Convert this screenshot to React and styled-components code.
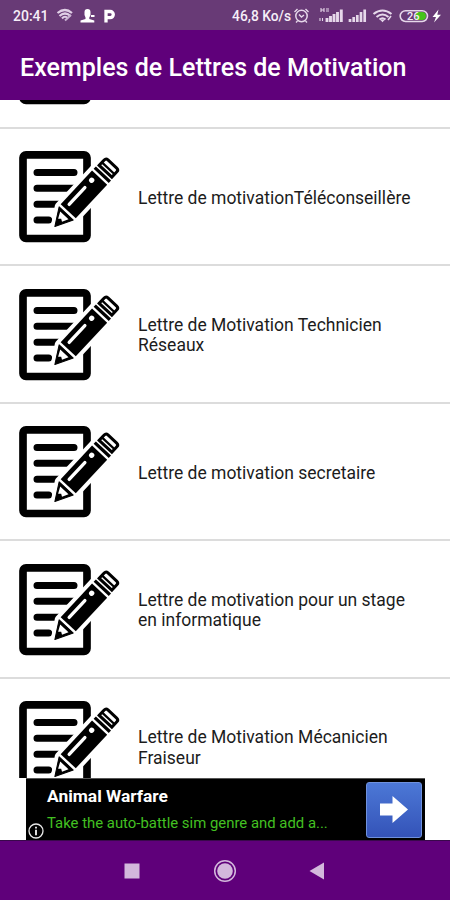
import React from 'react';
import styled, { createGlobalStyle } from 'styled-components';

const letters = [
    { id: 1, title: 'Lettre de motivationTéléconseillère' },
    { id: 2, title: 'Lettre de Motivation Technicien Réseaux' },
    { id: 3, title: 'Lettre de motivation secretaire' },
    { id: 4, title: 'Lettre de motivation pour un stage en informatique' },
    { id: 5, title: 'Lettre de Motivation Mécanicien Fraiseur' }
];

const LetterIcon = () => (
    <PageSvg viewBox="27 30 306 279">
        <rect x="39" y="44.5" width="192" height="251" rx="9" fill="#fff" stroke="#000" strokeWidth="23" />
        <path d="M81 97.5H192M81 145H192M81 192.5H150M81 240H116" stroke="#000" strokeWidth="21" strokeLinecap="round" />
        <g transform="translate(277 104) rotate(-47)">
            {/* white halo keeps the pencil clear of the sheet */}
            <path d="M-208 0L-158 -31H42V31H-158Z" fill="#fff" stroke="#fff" strokeWidth="24" strokeLinejoin="round" />
            <path d="M-211 2L-159 -29V29Z" fill="#000" stroke="#000" strokeWidth="3" strokeLinejoin="round" />
            <path d="M-167 -17V17L-186 8L-181 0L-187 -7Z" fill="#fff" />
            <path d="M-150 -31H-12V31H-150Z" fill="#000" />
            <path d="M-133 -12H-64" stroke="#fff" strokeWidth="10" strokeLinecap="round" />
            <circle cx="-34" cy="-12" r="8" fill="#fff" />
            <path d="M0 -31V31" stroke="#000" strokeWidth="10" />
            <path d="M14 -26H36Q44 -26 44 -18V18Q44 26 36 26H14Z" fill="#fff" stroke="#000" strokeWidth="9" />
            <path d="M26 -26V26" stroke="#000" strokeWidth="7" />
        </g>
    </PageSvg>
);

const NoticeIcons = () => (
    <svg width="62" height="20" viewBox="56 6 62 20" fill="none">
        <path d="M57.500 13Q65 7 72 13M59.500 16Q65 11 70.500 16M62 18.500Q65 15 68 18.500" stroke="#e0cfe6" strokeWidth="2.200" />
        <path d="M65 20.500L71 15" stroke="#c9b2d2" strokeWidth="2" />
        <path d="M84.500 12q0-3 3-3t3 3v3l-1.200 2.500v1.500l5 1.500v2H80.500v-2l5-1.500v-1.500L84.500 15zM91 15h3.500v2H91z" fill="#fff" />
        <path d="M106 22.500V11.500h4.200a2.700 2.700 0 0 1 0 6.200H106" stroke="#fff" strokeWidth="3.300" />
    </svg>
);

const PhoneIcons = () => (
    <svg width="151" height="20" viewBox="292 6 151 20" fill="none" stroke="#e6d8ea">
        <circle cx="301.500" cy="16" r="5.700" strokeWidth="1.500" />
        <path d="M299 14.500l2.500 2.500 2.500-2M294.500 12l3-3M308.500 12l-3-3M297.500 21l-1.500 1.500M305.500 21l1.500 1.500" strokeWidth="1.400" />
        <path d="M321 8v4M321 10h3M324 8v4M326 9h3M326 11h3M320 18v3M322.500 18v3" strokeWidth="1.100" />
        <path d="M327 22v-4M330.500 22v-6M334 22v-8M337.500 22V12M341.300 22V9.500" strokeWidth="2.900" />
        <path d="M350 22v-3M353.700 22v-5M357.300 22v-7M361 22V12M364.700 22V9.500" strokeWidth="2.700" />
        <path d="M373.500 14Q382.500 7 391.500 14M376.500 17Q382.500 12 388.500 17M379.500 19.500Q382.500 17 385.500 19.500" strokeWidth="2.100" />
        <path d="M380 19.500h5l-2.500 2.800z" fill="#e6d8ea" stroke="none" />
        <path d="M388 20l3-4" strokeWidth="1.600" />
        <rect x="400.200" y="10.700" width="27.300" height="10.800" rx="5.400" strokeWidth="1.600" />
        <path d="M416 12h6a4 4 0 0 1 0 8h-6z" fill="#45c41c" stroke="none" />
        <text x="407" y="20.200" fontSize="11" fontWeight="500" fill="#f3eaf5" stroke="none">26</text>
        <path d="M438.500 9.500L432.500 17h3.500l-2 5.500 7-7.700h-3.700z" fill="#fff" stroke="none" />
    </svg>
);

const App = () => {
    return (
        <Screen>
            <GlobalStyle />
            <StatusBar>
                <StatusGroup>
                    <StatusText>20:41</StatusText>
                    <NoticeIcons />
                </StatusGroup>
                <StatusGroup $tight>
                    <StatusText $small>46,8 Ko/s</StatusText>
                    <PhoneIcons />
                </StatusGroup>
            </StatusBar>
            <Header>Exemples de Lettres de Motivation</Header>
            <List>
                <PreviousRow><LetterIcon /></PreviousRow>
                {letters.map(item => (
                    <Row key={item.id}>
                        <LetterIcon />
                        <RowTitle>{item.title}</RowTitle>
                    </Row>
                ))}
            </List>
            <AdBar>
                <Ad>
                    <AdInfo>
                        <svg width="16" height="16" viewBox="0 0 16 16" fill="none" stroke="#e8e8e8">
                            <circle cx="8" cy="8" r="7" strokeWidth="1.300" />
                            <path d="M8 3.800v1.800M8 6.800v5.400" strokeWidth="1.900" />
                        </svg>
                    </AdInfo>
                    <AdText>
                        <AdTitle>Animal Warfare</AdTitle>
                        <AdLine>Take the auto-battle sim genre and add a...</AdLine>
                    </AdText>
                    <AdButton aria-label="Animal Warfare">
                        <svg width="28" height="27" viewBox="0 0 28 27">
                            <path d="M0 7.500H12.500V0L28 13.500L12.500 27V19.500H0Z" fill="#fff" />
                        </svg>
                    </AdButton>
                </Ad>
            </AdBar>
            <NavBar>
                <svg width="16" height="16" viewBox="0 0 16 16">
                    <rect x="0.500" y="0.500" width="15" height="15" fill="#d3b8dc" />
                </svg>
                <svg width="24" height="24" viewBox="0 0 24 24">
                    <circle cx="12" cy="12" r="10.300" fill="none" stroke="#d3b8dc" strokeWidth="1.500" />
                    <circle cx="12" cy="12" r="7.800" fill="#d3b8dc" />
                </svg>
                <svg width="16" height="18" viewBox="0 0 16 18">
                    <path d="M15 0.500V17.500L0.500 9Z" fill="#d3b8dc" />
                </svg>
            </NavBar>
        </Screen>
    );
};

export default App;

const GlobalStyle = createGlobalStyle`
    body {
        margin: 0;
        font-family: Roboto, sans-serif;
    }
    * {
        box-sizing: border-box;
    }
    svg {
        display: block;
        flex: none;
    }
`;

const Screen = styled.div`
    width: 450px;
    height: 900px;
    display: flex;
    flex-direction: column;
    background: #fff;
    overflow: hidden;
`;

const StatusBar = styled.div`
    height: 30px;
    padding: 2px 7px 0 13px;
    display: flex;
    justify-content: space-between;
    align-items: center;
    background: #683a76;
    color: #f6eef8;
`;

const StatusGroup = styled.div`
    display: flex;
    align-items: center;
    gap: ${props => (props.$tight ? '1px' : '7px')};
`;

const StatusText = styled.span`
    font-size: ${props => (props.$small ? '13.8px' : '14px')};
    font-weight: 500;
    line-height: 20px;
    white-space: nowrap;
`;

const Header = styled.header`
    height: 70px;
    padding: 5px 20px 0;
    display: flex;
    align-items: center;
    background: #5f007a;
    color: #fff;
    font-size: 25.05px;
    font-weight: 500;
    white-space: nowrap;
`;

const List = styled.main`
    flex: 1;
    min-height: 0;
    overflow: hidden;
`;

const PreviousRow = styled.div`
    height: 28.5px;
    padding: 0 0 22px 19px;
    display: flex;
    align-items: flex-end;
    overflow: hidden;
    border-bottom: 2px solid #dcdcdc;
`;

const PageSvg = styled.svg`
    width: 102px;
    height: 93px;
`;

const Row = styled.div`
    height: 137.5px;
    padding: 1px 38px 0 19px;
    display: flex;
    align-items: center;
    gap: 17px;
    border-bottom: 2px solid #dcdcdc;
`;

const RowTitle = styled.div`
    padding-top: 2px;
    color: #1c1c1c;
    font-size: 17.5px;
    line-height: 20.5px;
`;

const AdBar = styled.aside`
    height: 62px;
    padding: 0 25px 0 26px;
    background: #fff;
`;

const Ad = styled.div`
    height: 62px;
    padding-right: 3px;
    display: flex;
    align-items: center;
    background: #000;
    border-top: 1px solid #555;
`;

const AdInfo = styled.div`
    width: 21px;
    padding: 0 0 1px 2px;
    align-self: flex-end;
`;

const AdText = styled.div`
    flex: 1;
    display: flex;
    flex-direction: column;
    gap: 7px;
    white-space: nowrap;
`;

const AdTitle = styled.div`
    color: #fff;
    font-size: 17.4px;
    font-weight: 700;
    line-height: 20px;
`;

const AdLine = styled.div`
    color: #43c022;
    font-size: 14.9px;
    line-height: 20px;
`;

const AdButton = styled.button`
    width: 56px;
    height: 56px;
    padding: 0;
    display: flex;
    align-items: center;
    justify-content: center;
    border: 1px solid #6f91dd;
    border-radius: 3px;
    background: linear-gradient(#4c78d6, #3453b8);
`;

const NavBar = styled.nav`
    height: 60px;
    padding: 0 125px 0 124px;
    display: flex;
    align-items: center;
    justify-content: space-between;
    background: #5f007a;
    border-top: 1px solid #38084a;
`;
